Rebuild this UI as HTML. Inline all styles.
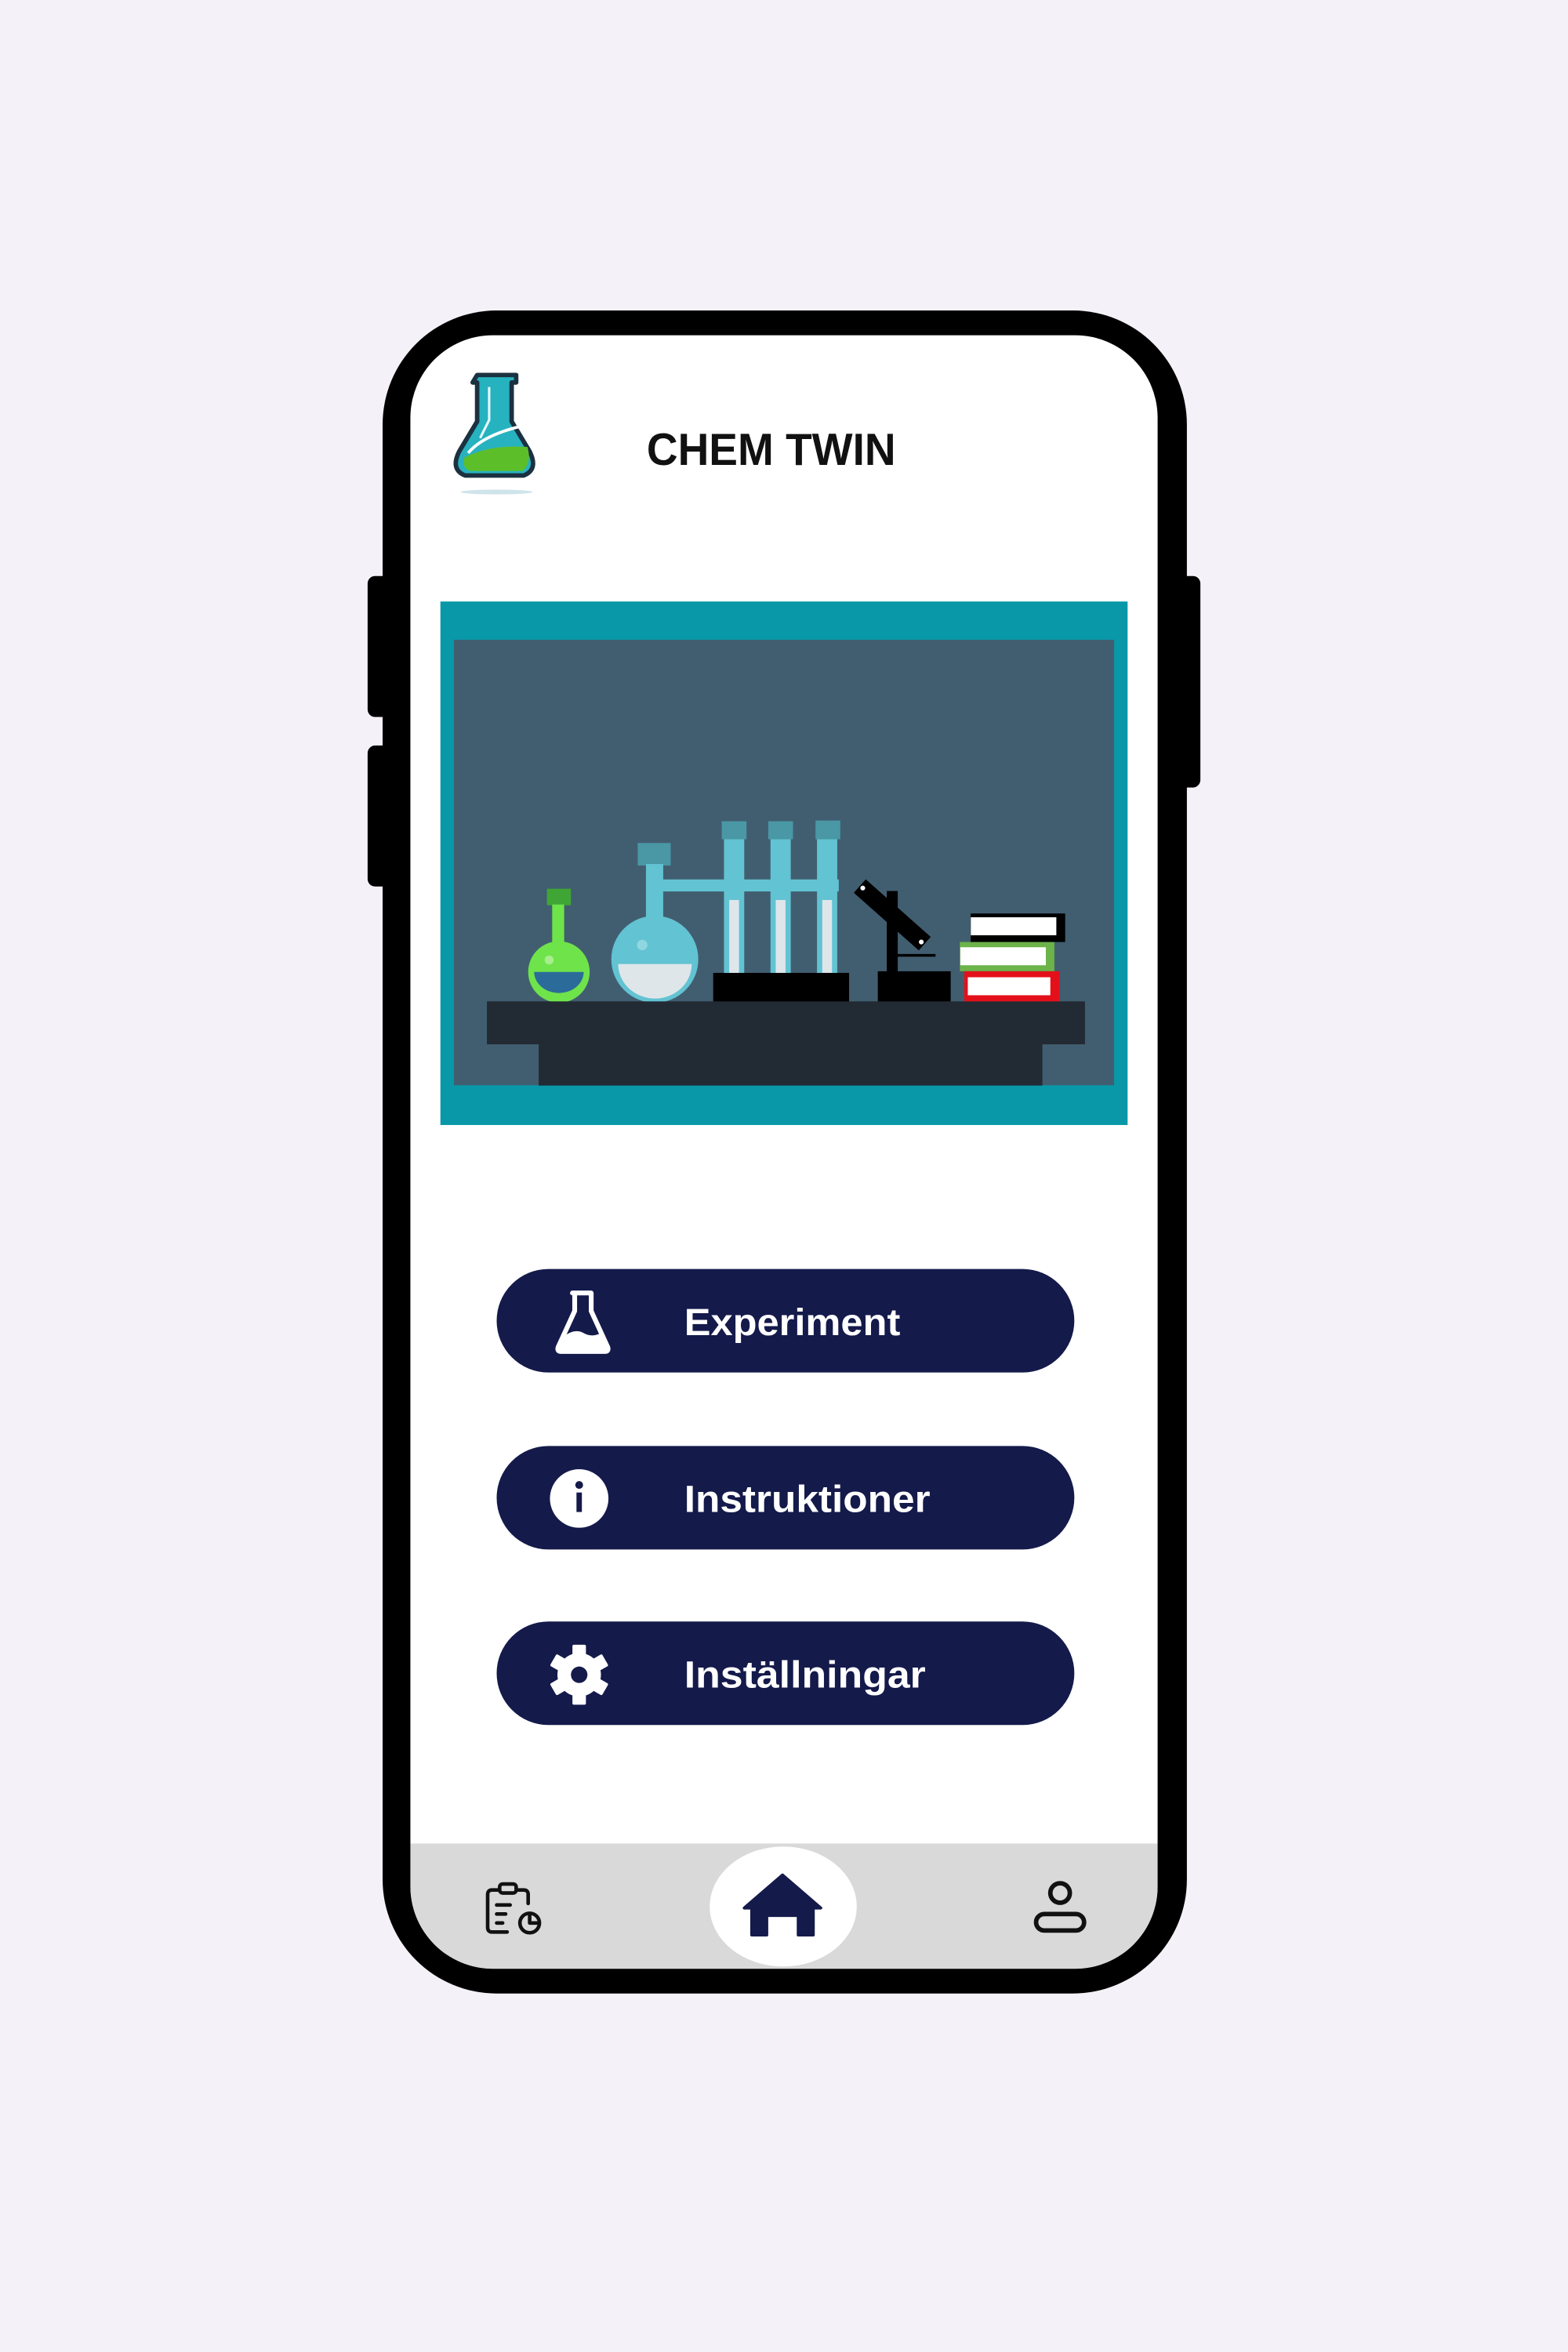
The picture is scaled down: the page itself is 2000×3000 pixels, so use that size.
<!DOCTYPE html>
<html><head><meta charset="utf-8"><style>
html,body{margin:0;padding:0;background:#f5f1f8;}
svg{display:block;}
text{font-family:"Liberation Sans",sans-serif;}
</style></head><body>
<svg width="2000" height="3000" viewBox="0 0 1045 1568" preserveAspectRatio="none" xmlns="http://www.w3.org/2000/svg">
<rect width="1045" height="1568" fill="#f5f1f8"/>
<rect x="245" y="384" width="16" height="94" rx="5" fill="#000"/>
<rect x="245" y="497" width="16" height="94" rx="5" fill="#000"/>
<rect x="784" y="384" width="16" height="141" rx="5" fill="#000"/>
<rect x="255" y="207" width="536" height="1122" rx="76" fill="#000"/>
<rect x="273.5" y="223.5" width="498" height="1089" rx="55" fill="#fff"/>
<clipPath id="sc"><rect x="273.5" y="223.5" width="498" height="1089" rx="55"/></clipPath>
<rect x="273.5" y="1229" width="498" height="90" fill="#d9d9d9" clip-path="url(#sc)"/>
<ellipse cx="331" cy="328" rx="24" ry="1.6" fill="#cfe3ea"/>
<path d="M318,250 h26 v5 h-3 v26 l12,20 q6,12 -4,16 h-39 q-10,-4 -4,-16 l12,-20 v-26 h-3 z" fill="#27b2c0" stroke="#1c3140" stroke-width="3" stroke-linejoin="round"/>
<path d="M309.5,305 q18,-9 42,-7 q3,10 -3,16 h-35 q-6,-2 -4,-9z" fill="#5cbf2a"/>
<path d="M312,302 q10,-12 36,-18" stroke="#fff" stroke-width="2" fill="none"/>
<path d="M326,258 v22 l-6,12" stroke="#e8fbfd" stroke-width="1.6" fill="none"/>
<text x="431" y="310" font-size="30" font-weight="bold" fill="#111" textLength="166" lengthAdjust="spacingAndGlyphs">CHEM TWIN</text>
<rect x="293.5" y="401" width="458" height="349" fill="#0898a8"/>
<rect x="302.5" y="426.5" width="440" height="297" fill="#415e70"/>
<rect x="364.5" y="592.5" width="16" height="11" fill="#3fa535"/>
<rect x="368" y="603" width="8" height="30" fill="#6fe34a"/>
<circle cx="372.5" cy="648" r="20.5" fill="#6fe34a"/>
<path d="M356,648 h33 a16.5,14 0 0 1 -33,0z" fill="#2b6b99"/>
<circle cx="366" cy="640" r="3" fill="#a7ee8e"/>
<rect x="441" y="586.3" width="118" height="8" fill="#62c3d2"/>
<rect x="425" y="562" width="22" height="15" fill="#4a97a5"/>
<rect x="430.5" y="576" width="11.5" height="42" fill="#62c3d2"/>
<circle cx="436.4" cy="639.5" r="29" fill="#62c3d2"/>
<path d="M412,642.7 h49 a24.5,23 0 0 1 -49,0z" fill="#dfe6ea"/>
<circle cx="428" cy="630" r="3.5" fill="#8fd6e0"/>
<g fill="#62c3d2">
<rect x="482.5" y="559" width="13.5" height="90"/>
<rect x="513.5" y="559" width="13.5" height="90"/>
<rect x="544.5" y="559" width="13.5" height="90"/>
</g>
<g fill="#4a97a5">
<rect x="481" y="547.5" width="16.5" height="12"/>
<rect x="512" y="547.5" width="16.5" height="12"/>
<rect x="543.5" y="547" width="16.5" height="12.5"/>
</g>
<g fill="#dfe6ea">
<rect x="486" y="600" width="6.5" height="49"/>
<rect x="517" y="600" width="6.5" height="49"/>
<rect x="548" y="600" width="6.5" height="49"/>
</g>
<rect x="475.3" y="648.6" width="90.6" height="19.5" fill="#000"/>
<rect x="585" y="647.5" width="48.6" height="20.5" fill="#000"/>
<rect x="591" y="594" width="7.3" height="54" fill="#000"/>
<path d="M573,590.7 L616.3,629.1" stroke="#000" stroke-width="12"/>
<rect x="598" y="636" width="25.5" height="1.8" fill="#000"/>
<circle cx="575" cy="592" r="1.6" fill="#fff"/><circle cx="614" cy="628" r="1.6" fill="#fff"/>
<rect x="646.9" y="609" width="63" height="19" fill="#000"/>
<rect x="647" y="611.5" width="57" height="12" fill="#fff"/>
<rect x="639.7" y="628" width="63" height="19.5" fill="#6cb34a"/>
<rect x="640" y="631.5" width="57" height="12" fill="#fff"/>
<rect x="642.6" y="647.5" width="63.6" height="20.5" fill="#e3101a"/>
<rect x="645" y="651.5" width="55" height="12" fill="#fff"/>
<rect x="324.5" y="667.6" width="398.6" height="28.6" fill="#222a33"/>
<rect x="359" y="696" width="335.7" height="27.7" fill="#222a33"/>
<rect x="331" y="846" width="385" height="69" rx="34.5" fill="#141a4a"/>
<rect x="331" y="964" width="385" height="69" rx="34.5" fill="#141a4a"/>
<rect x="331" y="1081" width="385" height="69" rx="34.5" fill="#141a4a"/>
<text x="456" y="890" font-size="25" font-weight="bold" fill="#fff" textLength="144" lengthAdjust="spacingAndGlyphs">Experiment</text>
<text x="456" y="1008" font-size="25" font-weight="bold" fill="#fff" textLength="164" lengthAdjust="spacingAndGlyphs">Instruktioner</text>
<text x="456" y="1125" font-size="25" font-weight="bold" fill="#fff" textLength="161" lengthAdjust="spacingAndGlyphs">Inställningar</text>
<path d="M381.5,862 h12 M383,862 v12 l-11,24 q-1,3 2,3 h29 q3,0 2,-3 l-11,-24 v-12" stroke="#fff" stroke-width="3.2" fill="none" stroke-linejoin="round" stroke-linecap="round"/>
<path d="M375.5,891 q8,-6 14,-2 q6,3 12,-1 l5,10 q0,2 -2,2 h-30 q-2,0 -1,-2z" fill="#fff"/>
<circle cx="386" cy="999" r="19.5" fill="#fff"/>
<circle cx="386" cy="990" r="2.6" fill="#141a4a"/>
<rect x="384.2" y="995" width="3.6" height="13" fill="#141a4a"/>
<g transform="translate(386,1116.5)" fill="#fff">
<circle r="14.5"/>
<g id="t"><rect x="-4.5" y="-20" width="9" height="8" rx="1"/></g>
<use href="#t" transform="rotate(60)"/><use href="#t" transform="rotate(120)"/><use href="#t" transform="rotate(180)"/><use href="#t" transform="rotate(240)"/><use href="#t" transform="rotate(300)"/>
<circle r="5.5" fill="#141a4a"/>
</g>
<ellipse cx="522" cy="1271" rx="49" ry="40" fill="#fff"/>
<path d="M521.5,1250 L547,1272 h-5 v18 h-10 v-13 h-21 v13 h-10 v-18 h-5 z" fill="#141a4a" stroke="#141a4a" stroke-width="2" stroke-linejoin="round"/>
<g fill="none" stroke="#111" stroke-width="2.4" stroke-linecap="round" stroke-linejoin="round">
<path d="M333,1260 h-5 q-3,0 -3,3 v22 q0,3 3,3 h10"/>
<path d="M344,1260 h5 q3,0 3,3 v6"/>
<rect x="333" y="1256" width="11" height="6" rx="2"/>
<path d="M331,1270 h9 M331,1276 h6 M331,1282 h4"/>
<circle cx="353" cy="1282" r="6.5"/>
<path d="M353,1276 v6 h6"/>
</g>
<g fill="none" stroke="#111" stroke-width="3">
<circle cx="706.5" cy="1262" r="6.5"/>
<rect x="690.5" y="1276" width="32" height="11" rx="5.5"/>
</g>
</svg>
</body></html>
